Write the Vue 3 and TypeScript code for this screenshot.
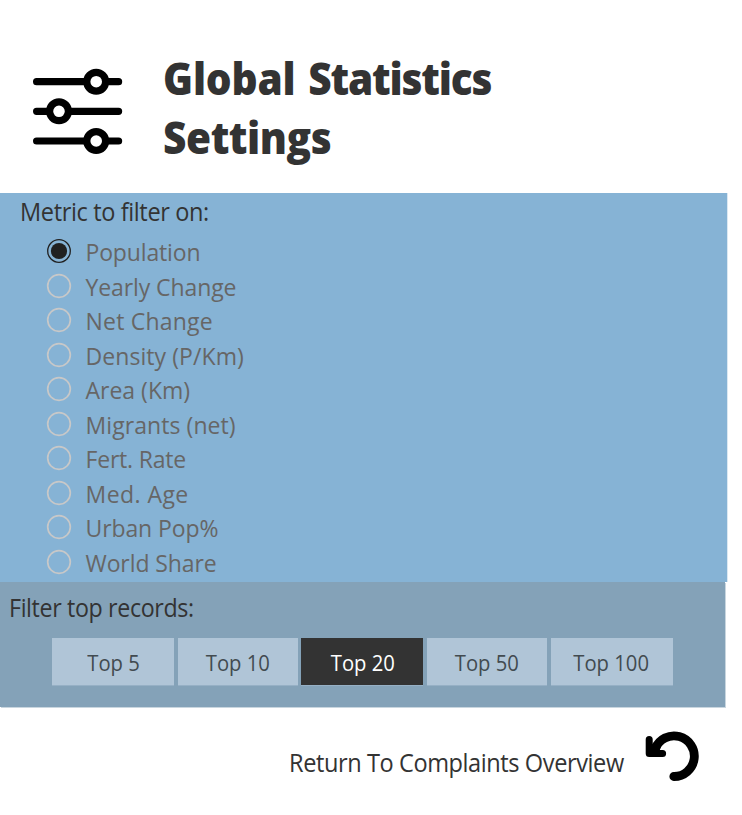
<script setup lang="ts">
import { ref } from 'vue'

const metrics: { name: string; spacing: number }[] = [
  { name: 'Population', spacing: -0.15 },
  { name: 'Yearly Change', spacing: -0.1 },
  { name: 'Net Change', spacing: 0.2 },
  { name: 'Density (P/Km)', spacing: 0.07 },
  { name: 'Area (Km)', spacing: 0 },
  { name: 'Migrants (net)', spacing: 0.07 },
  { name: 'Fert. Rate', spacing: -0.2 },
  { name: 'Med. Age', spacing: 0.45 },
  { name: 'Urban Pop%', spacing: -0.1 },
  { name: 'World Share', spacing: -0.1 },
]
const limits: number[] = [5, 10, 20, 50, 100]
const metric = ref<string>('Population')
const limit = ref<number>(20)
</script>

<template>
  <main class="page">
    <header class="header">
      <svg class="sliders" width="92" height="90" viewBox="0 0 92 90" aria-hidden="true">
        <g stroke="#000" stroke-width="7.2" stroke-linecap="round">
          <path d="M4.6 14.7H86.6M4.6 44.3H86.6M4.6 74H86.6" />
        </g>
        <g fill="#fff" stroke="#000" stroke-width="7.2">
          <circle cx="64.2" cy="14.7" r="9.4" />
          <circle cx="27" cy="44.3" r="9.4" />
          <circle cx="64.2" cy="74" r="9.4" />
        </g>
      </svg>
      <h1 class="title"><span class="line"><span class="first">Global</span> <span class="second">Statistics</span></span><br /><span class="line">Settings</span></h1>
    </header>

    <section class="metrics">
      <h2 class="label"><span class="metric-label">Metric to filter on:</span></h2>
      <ul class="options">
        <li v-for="m in metrics" :key="m.name" class="option" @click="metric = m.name">
          <svg class="radio" width="26" height="26" viewBox="0 0 26 26">
            <circle cx="13" cy="13" r="11.3" fill="none" :stroke="metric === m.name ? '#212121' : '#c8c8c8'" :stroke-width="metric === m.name ? 1.3 : 1.7" />
            <circle v-if="metric === m.name" cx="13" cy="13" r="8.1" fill="#212121" />
          </svg>
          <span class="name" :style="{ letterSpacing: m.spacing + 'px' }">{{ m.name }}</span>
        </li>
      </ul>
    </section>

    <section class="records">
      <h2 class="label"><span class="record-label">Filter top records:</span></h2>
      <div class="buttons">
        <button v-for="n in limits" :key="n" class="button" :class="{ active: limit === n }" @click="limit = n"><span class="caption">Top {{ n }}</span></button>
      </div>
    </section>

    <footer class="footer">
      <span class="return"><span class="return-text">Return To Complaints Overview</span></span>
      <svg class="back" width="60" height="56" viewBox="0 0 60 56" aria-hidden="true">
        <path d="M13.2 19.6A20.3 20.3 0 1 1 31.8 47.5" fill="none" stroke="#000" stroke-width="8.8" stroke-linecap="round" />
        <path d="M7.2 10.6V24.4H20.6" fill="none" stroke="#000" stroke-width="7" stroke-linecap="round" stroke-linejoin="round" />
        <path d="M8 17.5L11 14.5L19 18L17 23H8Z" />
      </svg>
    </footer>
  </main>
</template>

<style>
body { margin: 0; background: #fff; }
</style>

<style scoped>
.page { width: 742px; height: 815px; overflow: hidden; background: #fff; color: #333; font-family: "Open Sans", "Noto Sans", sans-serif; }
.header { display: flex; height: 193px; box-sizing: border-box; padding: 49px 0 0 32px; }
.sliders { display: block; margin-top: 18px; flex: none; }
.title { margin: 0 0 0 39px; font-size: 43.5px; line-height: 59px; font-weight: 800; white-space: nowrap; }
.line { display: inline-block; transform: scaleX(0.934); transform-origin: 0 0; letter-spacing: -0.5px; word-spacing: 2.8px; }
.first { letter-spacing: -0.2px; }
.second { letter-spacing: -1.3px; }
.label { margin: 0; font-size: 25px; line-height: 34px; font-weight: 400; white-space: nowrap; }
.metrics { width: 727px; height: 389px; box-sizing: border-box; padding: 1px 0 0 20px; background: #86b3d5; box-shadow: 1px 0 0 #dbe8f2; }
.metric-label, .record-label, .return-text, .caption { display: inline-block; transform-origin: 0 0; }
.metric-label { transform: scaleX(0.942); letter-spacing: -0.4px; }
.record-label { transform: scaleX(0.93); letter-spacing: -0.4px; }
.options { list-style: none; margin: 6px 0 0 26px; padding: 0; }
.option { display: flex; align-items: center; height: 34.5px; font-size: 23px; line-height: 34px; color: #666; white-space: nowrap; }
.name { padding-top: 2px; }
.radio { flex: none; margin-right: 13.5px; }
.records { position: relative; width: 725px; height: 125px; box-sizing: border-box; padding: 8px 0 0 9px; background: #84a2b8; box-shadow: 1px 1px 0 #c9d6df; }
.buttons { display: grid; grid-template-columns: 122px 120.5px 122px 120.5px 122px; column-gap: 3.3px; margin: 14px 0 0 43.4px; }
.button { height: 47px; border: 0; padding: 2px 0 0; background: #b0c5d7; color: #424b50; font: 400 22px/45px "Open Sans", sans-serif; box-shadow: 0 1px 0 #96b0c5; }
.caption { transform: scaleX(0.92); transform-origin: 50% 0; }
.button.active { background: #333; color: #fff; }
.footer { display: flex; padding: 22px 0 0 289px; }
.return { width: 353px; margin-top: 16px; font-size: 25.3px; line-height: 34px; white-space: nowrap; }
.return-text { transform: scaleX(0.932); letter-spacing: -0.45px; }
.back { flex: none; }
</style>
